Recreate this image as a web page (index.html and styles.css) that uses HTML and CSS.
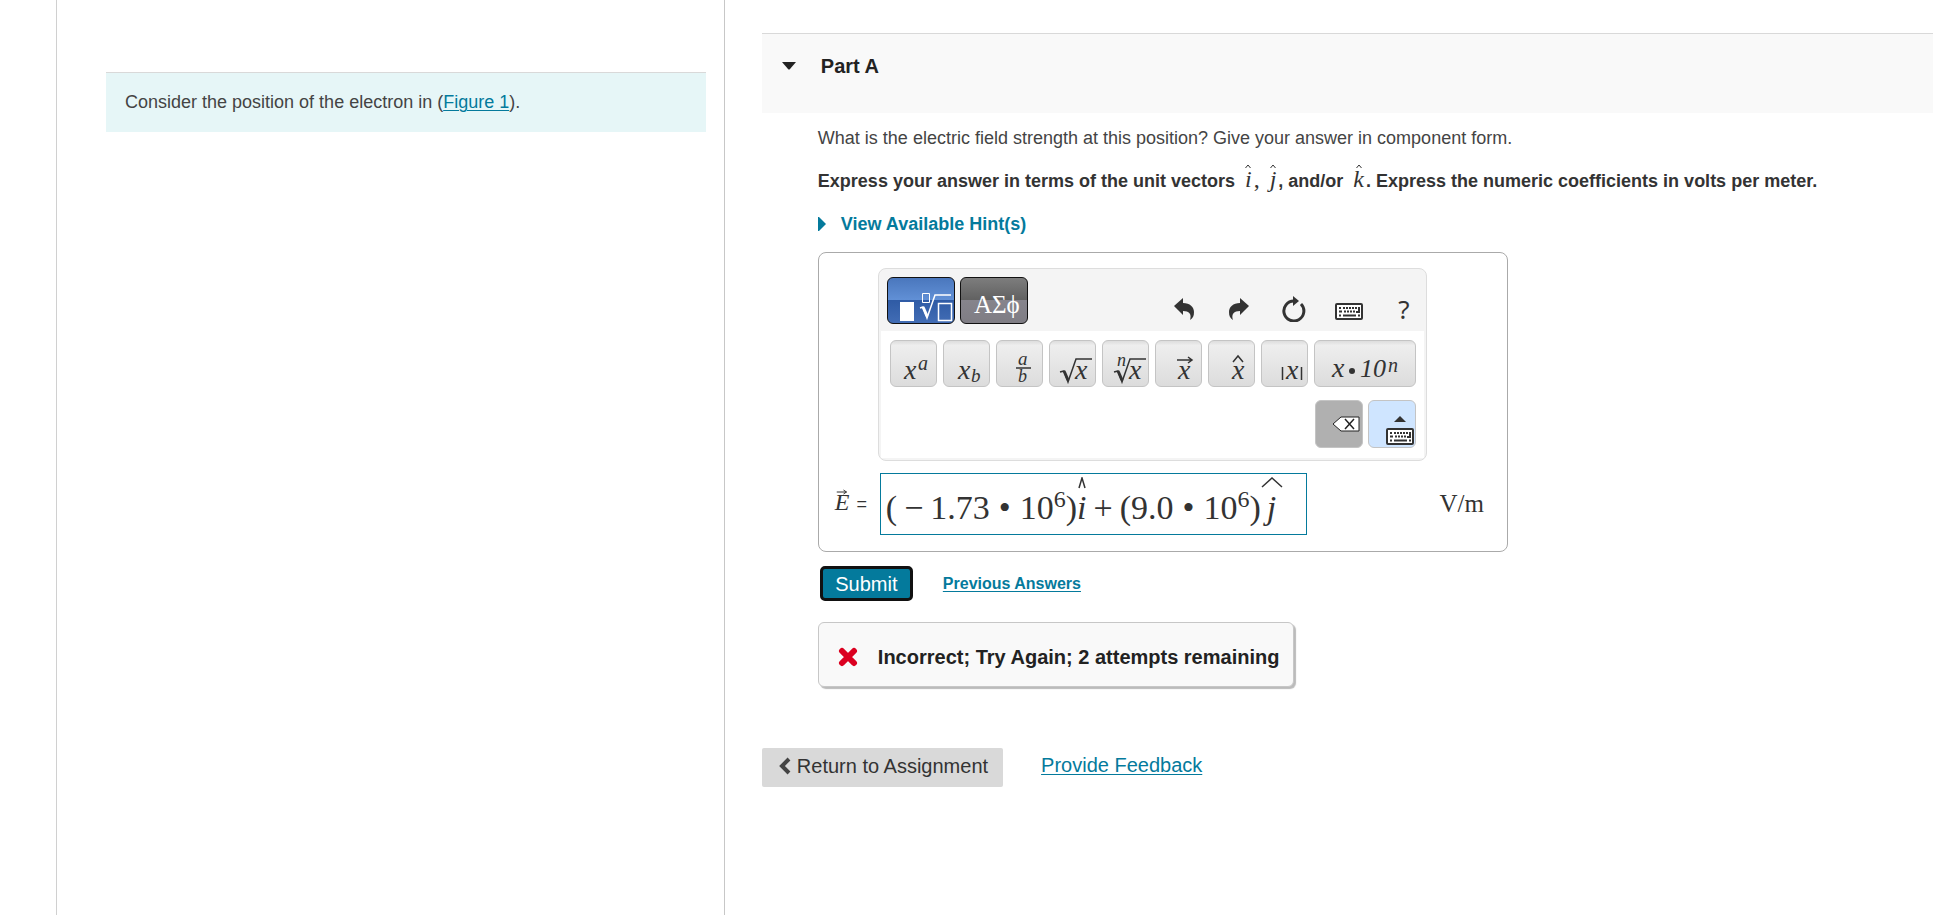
FILE: index.html
```html
<!DOCTYPE html>
<html lang="en">
<head>
    <meta charset="utf-8">
    <title>Part A</title>
    <link rel="stylesheet" href="styles.css">
</head>
<body>
    <!-- shared icon shapes -->
    <svg class="defs" width="0" height="0" aria-hidden="true">
        <symbol id="keyboard" viewBox="0 0 28 18">
            <rect x="1" y="1" width="26" height="15" rx="1" fill="#fff" stroke="#333" stroke-width="2"/>
            <path d="M4 5h2M8 5h2M11 5h2M14 5h2M17 5h2M20 5h2M4 8.500h3M9 8.500h2M12 8.500h2M15 8.500h2M18 8.500h2M4 12.500h2M8 12.500h13M23 12.500h2" stroke="#333" stroke-width="2"/>
            <path d="M24 4v5h-3" fill="none" stroke="#333" stroke-width="2"/>
        </symbol>
    </svg>

    <div class="page">
        <div class="rail"></div>

        <aside class="intro">
            <p class="intro-box">Consider the position of the electron in (<a href="#figure1">Figure 1</a>).</p>
        </aside>

        <main class="content">
            <header class="part-header">
                <button class="toggle" aria-label="Collapse Part A">
                    <svg width="14" height="8" viewBox="0 0 14 8"><path d="M0 0h14L8 7q-1 1-2 0z" fill="#222"/></svg>
                </button>
                <h2>Part A</h2>
            </header>

            <section class="part-body">
                <p class="question">What is the electric field strength at this position? Give your answer in component form.</p>
                <p class="instructions">Express your answer in terms of the unit vectors
                    <span class="vec">i<svg class="hat" width="7" height="4" viewBox="0 0 7 4"><path d="M1 4l2.500-3L6 4"/></svg></span><span class="math">,</span>
                    <span class="vec">j<svg class="hat" width="7" height="4" viewBox="0 0 7 4"><path d="M1 4l2.500-3L6 4"/></svg></span>, and/or
                    <span class="vec">k<svg class="hat" width="7" height="4" viewBox="0 0 7 4"><path d="M1 4l2.500-3L6 4"/></svg></span>. Express the numeric coefficients in volts per meter.</p>
                <button class="hints">
                    <svg width="8" height="14" viewBox="0 0 8 14"><path d="M0 0h1l7 7-7 7H0z" fill="#047a9c"/></svg>
                    View Available Hint(s)
                </button>

                <div class="answer">
                    <div class="editor">
                        <div class="editor-head">
                            <button class="tab active" aria-label="Templates">
                                <svg width="66" height="45" viewBox="0 0 66 45">
                                    <path d="M12 24h14v19H12z" fill="#fff"/>
                                    <g fill="none" stroke="#fff">
                                        <path d="M34.500 15.500h7v9h-7z"/>
                                        <path d="M50.500 25.500h13v17h-13z" stroke-width="1.500"/>
                                        <path d="M35 29l4 9" stroke-width="3"/>
                                        <path d="M32 30l3-1 4 11 8-23h16" stroke-width="1.500"/>
                                    </g>
                                </svg>
                            </button>
                            <button class="tab"><svg width="66" height="45" viewBox="0 0 66 45"><text x="13" y="35" font-size="25" fill="#fff">ΑΣϕ</text></svg></button>
                            <div class="tools">
                                <button class="tool" aria-label="Undo"><svg width="20" height="24" viewBox="0 0 20 24"><path d="M0 9L9 1v5c7 0 11 4 11 9 0 4-1 6-4 8 2-6-1-9-7-9v4z" fill="#333"/></svg></button>
                                <button class="tool" aria-label="Redo"><svg width="20" height="24" viewBox="0 0 20 24"><path d="M20 9L11 1v5C4 6 0 10 0 15c0 4 1 6 4 8-2-6 1-9 7-9v4z" fill="#333"/></svg></button>
                                <button class="tool" aria-label="Reset"><svg width="24" height="26" viewBox="0 0 24 26"><path d="M12 5A10 10 0 1 0 19 8" fill="none" stroke="#333" stroke-width="3"/><path d="M11 0l6 5-6 5z" fill="#333"/></svg></button>
                                <button class="tool" aria-label="Keyboard shortcuts"><svg class="low" width="28" height="18"><use href="#keyboard"/></svg></button>
                                <button class="tool help" aria-label="Help">?</button>
                            </div>
                        </div>

                        <div class="keys">
                            <div class="key-row">
                                <button class="key"><svg width="45" height="45" viewBox="0 0 45 45"><text x="13" y="38" font-size="28">x</text><text x="27" y="29" font-size="20">a</text></svg></button>
                                <button class="key"><svg width="45" height="45" viewBox="0 0 45 45"><text x="14" y="38" font-size="28">x</text><text x="27" y="41" font-size="19">b</text></svg></button>
                                <button class="key"><svg width="45" height="45" viewBox="0 0 45 45"><text x="21" y="24" font-size="19">a</text><path class="rule" d="M19 27h15"/><text x="21" y="41" font-size="18">b</text></svg></button>
                                <button class="key"><svg width="45" height="45" viewBox="0 0 45 45"><path class="rule" d="M10 31l4-1 4 11 8-23h16"/><path class="thick" d="M14 30l4 9"/><text x="25" y="38" font-size="28">x</text></svg></button>
                                <button class="key"><svg width="45" height="45" viewBox="0 0 45 45"><text x="14" y="25" font-size="18">n</text><path class="rule" d="M11 31l4-1 4 11 8-23h16"/><path class="thick" d="M15 30l4 9"/><text x="26" y="38" font-size="28">x</text></svg></button>
                                <button class="key"><svg width="45" height="45" viewBox="0 0 45 45"><path class="rule" d="M21 19h15M32 16l4 3-4 3"/><text x="22" y="38" font-size="28">x</text></svg></button>
                                <button class="key"><svg width="45" height="45" viewBox="0 0 45 45"><path class="rule" d="M24 21l5-6 5 6"/><text x="23" y="38" font-size="28">x</text></svg></button>
                                <button class="key"><svg width="45" height="45" viewBox="0 0 45 45"><path class="rule" d="M20.500 26v13M39.500 26v13"/><text x="24" y="38" font-size="28">x</text></svg></button>
                                <button class="key wide"><svg width="99" height="45" viewBox="0 0 99 45"><text x="17" y="36" font-size="28">x</text><circle cx="37" cy="30" r="3"/><text x="45" y="36" font-size="26">10</text><text x="73" y="31" font-size="20">n</text></svg></button>
                            </div>
                            <div class="key-row end">
                                <button class="key delete" aria-label="Delete"><svg width="45" height="45" viewBox="0 0 45 45"><path d="M17 22l8-7h18v14H25z" fill="#fff" stroke="#222"/><path d="M29 17l9 10M38 17l-9 10" stroke="#222" stroke-width="1.500"/></svg></button>
                                <button class="key dock" aria-label="Hide keypad"><svg width="45" height="45" viewBox="0 0 45 45"><path d="M25 20l6-6 6 6z"/><use href="#keyboard" x="17" y="26" width="28" height="18"/></svg></button>
                            </div>
                        </div>
                    </div>

                    <div class="answer-row">
                        <span class="symbol" id="answer-label"><span class="vec">E<svg class="arrow" width="11" height="6" viewBox="0 0 11 6"><path d="M0 3h10M7 1l3 2-3 2"/></svg></span> =</span>
                        <div class="field" role="textbox" tabindex="0" contenteditable="true" aria-labelledby="answer-label"><span>(</span><span class="op minus">−</span><span>1.73</span><span class="op">•</span><span>10<sup>6</sup></span><span>)</span><span class="unit-i">i<svg class="hat" width="8" height="12" viewBox="0 0 8 12"><path d="M1 11l3-10 3 10"/></svg></span><span class="op plus">+</span><span>(9.0</span><span class="op">•</span><span>10<sup>6</sup></span><span>)</span><span class="unit-j">j<svg class="hat" width="22" height="12" viewBox="0 0 22 12"><path d="M1 10L11 1l10 9"/></svg></span></div>
                        <span class="units">V/m</span>
                    </div>
                </div>

                <div class="actions">
                    <button class="submit">Submit</button>
                    <a class="previous" href="#previous">Previous Answers</a>
                </div>

                <div class="feedback" role="status">
                    <svg width="20" height="20" viewBox="0 0 20 20"><path d="M4 4l12 12M16 4L4 16" stroke="#db0020" stroke-width="6" stroke-linecap="round"/></svg>
                    Incorrect; Try Again; 2 attempts remaining
                </div>
            </section>

            <footer class="page-footer">
                <a class="return" href="#assignment"><svg width="12" height="18" viewBox="0 0 12 18"><path d="M10 2L3 9l7 7" fill="none" stroke="#444" stroke-width="4"/></svg>Return to Assignment</a>
                <a class="provide" href="#feedback">Provide Feedback</a>
            </footer>
        </main>
    </div>
</body>
</html>
```
FILE: styles.css
```css
* {
    box-sizing: border-box;
}
body {
    margin: 0;
    font-family: "Liberation Sans", Arial, sans-serif;
    font-size: 18px;
    line-height: 24px;
    color: #333;
    background: #fff;
}
p, h2 {
    margin: 0;
}
a {
    color: #047a9c;
    text-underline-offset: 2px;
    text-decoration-thickness: 1px;
}
button {
    padding: 0;
    border: none;
    background: none;
    font: inherit;
    color: inherit;
    cursor: pointer;
}
svg {
    display: block;
}
.defs {
    position: absolute;
}
.page {
    display: grid;
    grid-template-columns: 57px minmax(0, 0.356fr) minmax(0, 0.644fr);
    min-height: 100vh;
}
.rail {
    border-right: 1px solid #d0d0d0;
}

/* left column */
.intro {
    padding: 72px 18px 0 49px;
    border-right: 1px solid #c7c7c7;
}
.intro-box {
    padding: 17px 19px 18px;
    border-top: 1px solid #d9d9d9;
    background: #e6f6f7;
    color: #444;
}

/* right column */
.content {
    padding: 33px 0 0 37px;
}
.part-header {
    display: flex;
    align-items: flex-start;
    padding: 20px;
    height: 80px;
    border-top: 1px solid #d9d9d9;
    background: #f9f9f9;
}
.toggle {
    padding: 8px 0;
}
.part-header h2 {
    margin-left: 25px;
    font-size: 20px;
    color: #222;
}
.part-body {
    padding: 13px 20px 0 56px;
}
.question {
    margin-bottom: 19px;
    color: #444;
}
.instructions {
    font-weight: bold;
    margin-bottom: 19px;
}
.vec, .math {
    position: relative;
    font-family: "Liberation Serif", serif;
    font-size: 24px;
    font-weight: normal;
    line-height: 20px;
}
.vec {
    display: inline-block;
    font-style: italic;
}
.instructions .vec {
    margin: 0 2px 0 5px;
}
.hat, .arrow {
    position: absolute;
    left: 50%;
    transform: translateX(-50%);
    fill: none;
    stroke: #333;
}
.vec .hat {
    top: -5px;
}
.hints {
    display: flex;
    align-items: center;
    gap: 15px;
    margin-bottom: 16px;
    font-weight: bold;
    color: #047a9c;
}

/* answer box */
.answer {
    max-width: 690px;
    padding: 15px 23px 16px 16px;
    border: 1px solid #aaa;
    border-radius: 8px;
}
.editor {
    width: 549px;
    margin-left: 43px;
    padding: 2px;
    border: 1px solid #ddd;
    border-radius: 8px;
    background: #f4f4f4;
}
.editor-head {
    display: flex;
    gap: 5px;
    padding: 6px 4px 7px 6px;
}
.tab {
    width: 68px;
    height: 47px;
    border: 1px solid #111;
    border-radius: 6px;
    background: linear-gradient(#7d7d7d, #616161 49%, #86848c 50%, #7f7d84);
}
.tab text {
    font-family: "Liberation Serif", serif;
}
.tab.active {
    background: linear-gradient(#4a77bd, #6190d6 49%, #2f5ba5 50%, #426db5);
}
.tools {
    display: flex;
    gap: 23px;
    margin-left: auto;
    padding-top: 18px;
}
.tool {
    display: flex;
    align-items: center;
    justify-content: center;
    width: 32px;
    height: 28px;
}
.tool .low {
    margin-top: 6px;
}
.help {
    font-family: "Noto Sans", sans-serif;
    font-size: 26px;
}
.keys {
    padding: 9px 8px 10px 9px;
    background: #fff;
}
.key-row {
    display: flex;
    gap: 6px;
    margin-bottom: 13px;
}
.key-row.end {
    gap: 5px;
    justify-content: flex-end;
    margin-bottom: 0;
}
.key {
    width: 47px;
    height: 47px;
    border: 1px solid #c4c4c4;
    border-radius: 6px;
    background: linear-gradient(#ddd, #eee 10%, #dcdcdc);
}
.key svg {
    fill: #333;
}
.key text {
    font-family: "Liberation Serif", serif;
    font-style: italic;
}
.rule, .thick {
    fill: none;
    stroke: #333;
    stroke-width: 1.500px;
}
.thick {
    stroke-width: 3px;
}
.key.wide {
    flex: 1;
}
.key.delete, .key.dock {
    width: 48px;
    height: 48px;
    background: #b0b0b0;
}
.key.dock {
    background: #cfe5ff;
}

.answer-row {
    display: flex;
    align-items: center;
    margin-top: 12px;
}
.symbol {
    flex: 0 0 45px;
    white-space: nowrap;
}
.symbol .vec {
    margin-right: 2px;
}
.arrow {
    top: -3px;
}
.field {
    width: 427px;
    height: 62px;
    padding: 14px 5px 0;
    border: 1px solid #047a9c;
    font-family: "Liberation Serif", serif;
    font-size: 34px;
    line-height: 40px;
    white-space: nowrap;
    outline: none;
}
.field sup {
    font-size: 24px;
    line-height: 0;
    vertical-align: 12px;
}
.op {
    margin: 0 9px;
}
.op.plus, .op.minus {
    margin: 0 7px;
}
.unit-i, .unit-j {
    position: relative;
    font-style: italic;
}
.unit-j {
    margin-left: 6px;
}
.field .hat {
    top: -12px;
    stroke-width: 1.500px;
}
.units {
    margin-left: auto;
    font-family: "Liberation Serif", serif;
    font-size: 25px;
}

.actions {
    display: flex;
    align-items: center;
    gap: 30px;
    padding: 14px 2px 21px;
}
.submit {
    width: 93px;
    height: 35px;
    border: 3px solid #111;
    border-radius: 5px;
    background: #047a9c;
    color: #fff;
    font-size: 20px;
    line-height: 20px;
}
.previous {
    font-size: 16px;
    font-weight: bold;
}
.feedback {
    display: flex;
    align-items: center;
    gap: 20px;
    width: fit-content;
    height: 65px;
    padding: 4px 14px 0 19px;
    border: 1px solid #c7c7c7;
    border-radius: 6px;
    background: #f9f9f9;
    box-shadow: 2px 2px 1px #bbb;
    font-size: 20px;
    font-weight: bold;
    color: #222;
}

.page-footer {
    display: flex;
    align-items: flex-start;
    gap: 38px;
    margin-top: 61px;
    font-size: 20px;
}
.return {
    display: flex;
    align-items: center;
    gap: 6px;
    padding: 6px 15px 9px 17px;
    border-radius: 2px;
    background: #d9d9d9;
    color: #333;
    text-decoration: none;
}
.provide {
    padding-top: 5px;
}
```
